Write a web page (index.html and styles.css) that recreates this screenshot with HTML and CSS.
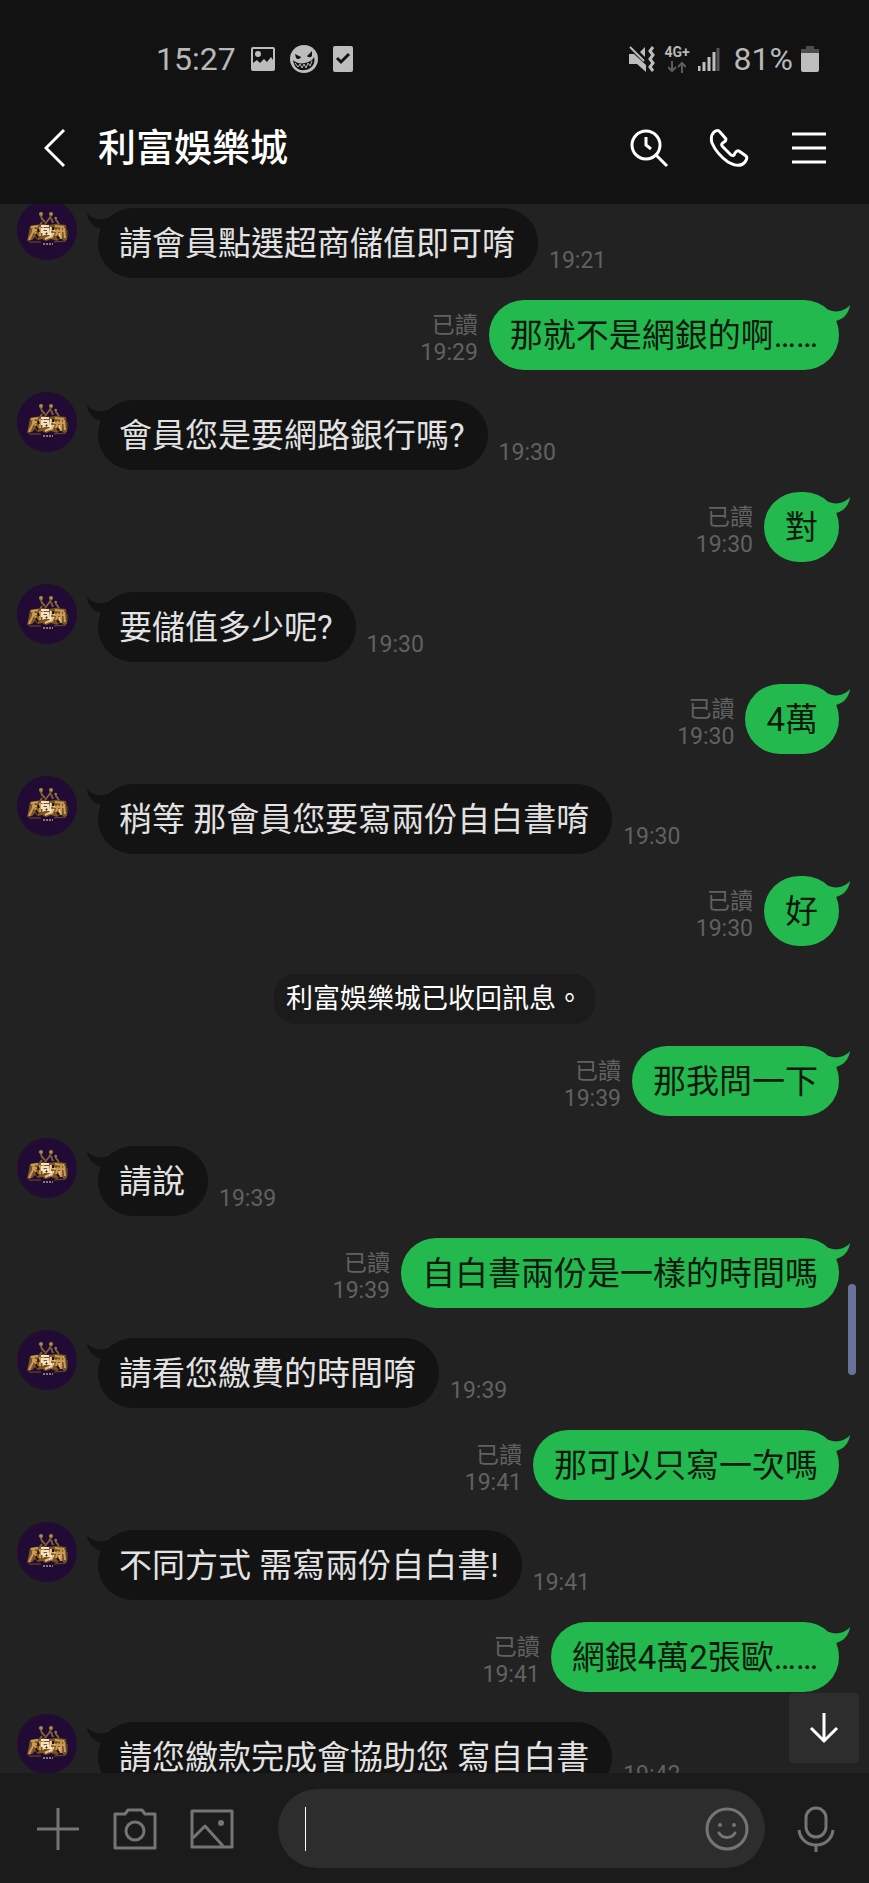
FILE: index.html
```
<!DOCTYPE html>
<html lang="zh-Hant">
	<head>
		<meta charset="UTF-8">
		<meta name="viewport" content="width=device-width, initial-scale=1">
		<title>利富娛樂城</title>
		<link rel="stylesheet" href="styles.css">
	</head>
	<body>
		<!-- shared shapes -->
		<svg class="defs" width="0" height="0" aria-hidden="true">
			<symbol id="logo" viewBox="0 0 60 60">
				<circle cx="30" cy="30" r="30" fill="#210a33"/>
				<g fill="none" stroke="#7d6138" stroke-width="2">
					<path d="M24 16l1 3 3 3M28 24l4-5 2-3M34 18l2 5M38 17l1 3 3 4M25 22l-2 3"/>
				</g>
				<g fill="#a98850"><circle cx="24" cy="14" r="2"/><circle cx="34" cy="14" r="2"/><circle cx="39" cy="18" r="1"/></g>
				<path d="M13 26l5-1 8-1 5 1 8-1 10 1 1 15-3 1-3-3-4 3-6-2-5 2-4-2-4 1-3-3-3 3-5 1 2-9z" fill="#7b5424"/>
				<path d="M14 27l7-1M17 26l-1 6-4 8M15 30h5M17 31l4 5M23 27v9M26 26v10M38 26l9 1M41 29l-2 7M44 27v12M47 28l1 10M38 31h10" fill="none" stroke="#c99b57" stroke-width="2"/>
				<path d="M24 26h8M25 29h6v3h-6zM26 34h9l-3 4M34 27l-1 6" fill="none" stroke="#f0e2c2" stroke-width="2"/>
				<path d="M34 29l4 2M37 33l-3 5M28 39l4-2M42 33l1 4" stroke="#e3bd7c" stroke-width="2"/>
				<path d="M19 34l2 4M21 29l1 3M36 27v3M40 36l2 3M29 33l1 1" stroke="#23130f" stroke-width="2"/>
				<path d="M12 42h12M37 42l12-1M50 30v8" stroke="#6d512f"/>
				<path d="M26 44h10" stroke="#8b7a70" stroke-width="2" stroke-dasharray="2 1"/>
			</symbol>
			<symbol id="tail" viewBox="0 0 30 30">
				<path d="M0 5C5 11 14 13 21 10L30 14V28H12L14 21C6 19 1 13 0 5z" fill="currentColor"/>
			</symbol>
		</svg>

		<div class="status">
			<span class="clock">15:27</span>
			<div class="notes">
				<svg width="26" height="28" viewBox="0 0 26 28"><path fill="#bdbdbd" fill-rule="evenodd" d="M3 2h20a2 2 0 0 1 2 2v20a2 2 0 0 1-2 2H3a2 2 0 0 1-2-2V4a2 2 0 0 1 2-2zm0 2v14l4-3 3 3 4-4 3 3 4-5 2 3V4zM8 6a3 3 0 1 1 0 6 3 3 0 0 1 0-6z"/></svg>
				<svg width="28" height="28" viewBox="0 0 28 28"><circle cx="14" cy="14" r="14" fill="#bdbdbd"/><path fill="#121212" d="M5 9l6 3a3 3 0 0 1-5 1zM22 6l-5 5a3 3 0 0 0 5 0zM3 15c3 3 7 4 12 3s8-3 9-6c2 6-2 12-9 13S4 22 3 15z"/><path d="M5 18l3 4 2-3 2 4 2-4 2 4 2-5 2 3 2-5" fill="none" stroke="#bdbdbd" stroke-width="1"/></svg>
				<svg width="22" height="28" viewBox="0 0 22 28"><rect x="1" y="1" width="20" height="26" rx="2" fill="#bdbdbd"/><path d="M5 13l4 4 8-8" fill="none" stroke="#121212" stroke-width="3"/></svg>
			</div>
			<div class="signals">
				<svg width="28" height="28" viewBox="0 0 28 28"><path fill="#bdbdbd" d="M1 9h5l12 11v7l-9-8H1zM12 7l5-5v10z"/><path d="M2 2l14 14" stroke="#bdbdbd" stroke-width="2"/><path d="M25 2l-3 4 3 4-3 4 3 4-3 4 3 4" fill="none" stroke="#bdbdbd" stroke-width="3"/></svg>
				<div class="net">
					<span>4G+</span>
					<svg width="18" height="12" viewBox="0 0 18 12"><path d="M4 0v10M0 6l4 4 4-4M14 12V2M10 6l4-4 4 4" fill="none" stroke="#5c5c5c" stroke-width="2"/></svg>
				</div>
				<svg width="22" height="26" viewBox="0 0 22 26"><path d="M1 20v5M6 16v9M11 11v14M16 6v19" stroke="#bdbdbd" stroke-width="3"/><path d="M20 2v23" stroke="#555" stroke-width="3"/></svg>
				<span class="percent">81%</span>
				<svg width="18" height="28" viewBox="0 0 18 28"><path d="M5 1h8v3h5v5H0V4h5z" fill="#4d4d4d"/><path d="M0 8h18v17a2 2 0 0 1-2 2H2a2 2 0 0 1-2-2z" fill="#bdbdbd"/></svg>
			</div>
		</div>

		<header class="topbar">
			<button type="button" class="back" aria-label="返回"><svg width="22" height="40" viewBox="0 0 22 40"><path d="M20 2L2 20l18 18" stroke-width="3"/></svg></button>
			<h1>利富娛樂城</h1>
			<button type="button" aria-label="搜尋"><svg width="40" height="40" viewBox="0 0 40 40"><g stroke-width="3"><circle cx="17" cy="17" r="14"/><path d="M27 27l11 11M17 9v8l5 4"/></g></svg></button>
			<button type="button" aria-label="通話"><svg width="40" height="40" viewBox="0 0 40 40"><path stroke-width="3" stroke-linejoin="round" d="M5 4Q9 1 11 4L17 11Q17 13 15 14C12 16 12 17 14 19L22 27C24 28 25 28 26 25Q28 22 30 23L37 28Q39 30 36 34C32 39 26 38 19 34C12 29 6 22 3 15Q1 8 5 4z"/></svg></button>
			<button type="button" aria-label="選單"><svg width="40" height="40" viewBox="0 0 40 40"><path stroke-width="3" d="M3 6h34M3 20h34M3 34h34"/></svg></button>
		</header>

		<main class="chat">
			<div class="messages">
				<div class="msg in"><svg class="avatar"><use href="#logo"/></svg><p class="bubble">請會員點選超商儲值即可唷<svg class="tail"><use href="#tail"/></svg></p><div class="meta"><time>19:21</time></div></div>
				<div class="msg out"><div class="meta"><span>已讀</span><time>19:29</time></div><p class="bubble">那就不是網銀的啊……<svg class="tail"><use href="#tail"/></svg></p></div>
				<div class="msg in"><svg class="avatar"><use href="#logo"/></svg><p class="bubble">會員您是要網路銀行嗎?<svg class="tail"><use href="#tail"/></svg></p><div class="meta"><time>19:30</time></div></div>
				<div class="msg out"><div class="meta"><span>已讀</span><time>19:30</time></div><p class="bubble">對<svg class="tail"><use href="#tail"/></svg></p></div>
				<div class="msg in"><svg class="avatar"><use href="#logo"/></svg><p class="bubble">要儲值多少呢?<svg class="tail"><use href="#tail"/></svg></p><div class="meta"><time>19:30</time></div></div>
				<div class="msg out"><div class="meta"><span>已讀</span><time>19:30</time></div><p class="bubble">4萬<svg class="tail"><use href="#tail"/></svg></p></div>
				<div class="msg in"><svg class="avatar"><use href="#logo"/></svg><p class="bubble">稍等 那會員您要寫兩份自白書唷<svg class="tail"><use href="#tail"/></svg></p><div class="meta"><time>19:30</time></div></div>
				<div class="msg out"><div class="meta"><span>已讀</span><time>19:30</time></div><p class="bubble">好<svg class="tail"><use href="#tail"/></svg></p></div>
				<p class="notice">利富娛樂城已收回訊息。</p>
				<div class="msg out"><div class="meta"><span>已讀</span><time>19:39</time></div><p class="bubble">那我問一下<svg class="tail"><use href="#tail"/></svg></p></div>
				<div class="msg in"><svg class="avatar"><use href="#logo"/></svg><p class="bubble">請說<svg class="tail"><use href="#tail"/></svg></p><div class="meta"><time>19:39</time></div></div>
				<div class="msg out"><div class="meta"><span>已讀</span><time>19:39</time></div><p class="bubble">自白書兩份是一樣的時間嗎<svg class="tail"><use href="#tail"/></svg></p></div>
				<div class="msg in"><svg class="avatar"><use href="#logo"/></svg><p class="bubble">請看您繳費的時間唷<svg class="tail"><use href="#tail"/></svg></p><div class="meta"><time>19:39</time></div></div>
				<div class="msg out"><div class="meta"><span>已讀</span><time>19:41</time></div><p class="bubble">那可以只寫一次嗎<svg class="tail"><use href="#tail"/></svg></p></div>
				<div class="msg in"><svg class="avatar"><use href="#logo"/></svg><p class="bubble">不同方式 需寫兩份自白書!<svg class="tail"><use href="#tail"/></svg></p><div class="meta"><time>19:41</time></div></div>
				<div class="msg out"><div class="meta"><span>已讀</span><time>19:41</time></div><p class="bubble">網銀4萬2張歐……<svg class="tail"><use href="#tail"/></svg></p></div>
				<div class="msg in"><svg class="avatar"><use href="#logo"/></svg><p class="bubble">請您繳款完成會協助您 寫自白書<svg class="tail"><use href="#tail"/></svg></p><div class="meta"><time>19:42</time></div></div>
			</div>
			<div class="scrollbar"></div>
			<button type="button" class="to-bottom" aria-label="到最新訊息"><svg width="30" height="32" viewBox="0 0 30 32"><path d="M15 1v28M2 16l13 13 13-13" stroke-width="3"/></svg></button>
		</main>

		<form class="composer">
			<button type="button" aria-label="更多"><svg width="44" height="46" viewBox="0 0 44 46"><path stroke-width="3" d="M1 23h42M22 2v42"/></svg></button>
			<button type="button" aria-label="相機"><svg width="44" height="46" viewBox="0 0 44 46"><g stroke-width="3" stroke-linejoin="round"><path d="M2 8h10l3-4h14l3 4h10v34H2z"/><circle cx="22" cy="25" r="9"/></g></svg></button>
			<button type="button" aria-label="相簿"><svg width="44" height="46" viewBox="0 0 44 46"><g stroke-width="3" stroke-linejoin="round"><path d="M2 5h40v36H2z"/><path d="M3 32l12-12 18 20"/></g><circle cx="31" cy="17" r="3" fill="#757575" stroke="none"/></svg></button>
			<div class="field">
				<span class="caret"></span>
				<input type="text" aria-label="輸入訊息">
				<button type="button" aria-label="貼圖"><svg width="44" height="46" viewBox="0 0 44 46"><g stroke-width="3"><circle cx="22" cy="23" r="20"/><path d="M14 27c4 6 12 6 16 0" stroke-linecap="round"/></g><g fill="#757575" stroke="none"><circle cx="15" cy="19" r="2"/><circle cx="29" cy="19" r="2"/></g></svg></button>
			</div>
			<button type="button" aria-label="語音訊息"><svg width="44" height="46" viewBox="0 0 44 46"><g stroke-width="3"><rect x="12" y="2" width="20" height="29" rx="10"/><path d="M5 24c1 9 8 15 17 15s16-6 17-15M22 39v7"/></g></svg></button>
		</form>
	</body>
</html>
```

FILE: styles.css
```
* {
	box-sizing: border-box;
}
body {
	margin: 0;
	height: 100vh;
	display: flex;
	flex-direction: column;
	background: #121212;
	color: #fff;
	font-family: Roboto, "Noto Sans CJK TC", sans-serif;
}
p, h1 {
	margin: 0;
}
svg {
	display: block;
	flex: none;
}
button {
	padding: 0;
	border: none;
	background: none;
}
button svg {
	fill: none;
	stroke: #fff;
}
.defs {
	position: absolute;
}

/* status bar */
.status {
	display: flex;
	align-items: center;
	padding: 40px 50px 18px 156px;
	line-height: 38px;
	font-size: 32px;
	color: #b8b8b8;
}
.notes {
	display: flex;
	gap: 14px;
	margin-left: 14px;
}
.signals {
	display: flex;
	align-items: center;
	gap: 8px;
	margin-left: auto;
}
.net {
	display: flex;
	flex-direction: column;
	align-items: center;
	gap: 2px;
	font-size: 14px;
	font-weight: 700;
	line-height: 14px;
}
.percent {
	margin: 0 0 0 6px;
}

/* title bar */
.topbar {
	display: flex;
	align-items: center;
	gap: 40px;
	padding: 32px 40px 36px 44px;
}
.topbar h1 {
	flex: 1;
	margin-left: -8px;
	font-size: 38px;
	font-weight: 500;
	line-height: 40px;
}

/* conversation */
.chat {
	flex: 1;
	min-height: 0;
	position: relative;
	overflow: hidden;
	background: #222;
}
.messages {
	display: flex;
	flex-direction: column;
	gap: 22px;
	margin-top: -4px;
}
.msg {
	display: flex;
	align-items: flex-end;
	gap: 11px;
}
.in {
	padding-left: 17px;
}
.out {
	justify-content: flex-end;
	padding-right: 30px;
}
.avatar {
	width: 60px;
	height: 60px;
	margin-right: 10px;
	align-self: flex-start;
}
.bubble {
	position: relative;
	padding: 16px 21px 14px;
	border-radius: 35px;
	font-size: 33px;
	line-height: 40px;
}
.in .bubble {
	margin-top: 8px;
	padding-right: 23px;
	background: #131313;
	color: #e2e2e2;
}
.out .bubble {
	background: #23b94f;
	color: #0b1a0e;
}
.tail {
	position: absolute;
	top: 0;
	width: 30px;
	height: 30px;
}
.in .tail {
	left: -11px;
	color: #131313;
}
.out .tail {
	right: -11px;
	color: #23b94f;
	transform: scaleX(-1);
}
.meta {
	display: flex;
	flex-direction: column;
	padding-bottom: 4px;
	font-size: 23px;
	line-height: 27px;
	color: #616161;
}
.out .meta {
	text-align: right;
}
.notice {
	align-self: center;
	margin-top: 6px;
	padding: 5px 12px;
	border-radius: 22px;
	background: #1b1b1b;
	font-size: 27px;
	line-height: 40px;
}
.scrollbar {
	position: absolute;
	top: 1080px;
	right: 13px;
	width: 8px;
	height: 91px;
	border-radius: 4px;
	background: #69729a;
}
.to-bottom {
	position: absolute;
	right: 10px;
	bottom: 10px;
	width: 70px;
	height: 70px;
	border-radius: 4px;
	background: #2d2d2d;
}
.to-bottom svg {
	margin: 0 auto;
}

/* input row */
.composer {
	display: flex;
	align-items: center;
	gap: 33px;
	padding: 16px 31px 15px 36px;
	background: #1b1b1b;
}
.composer svg {
	stroke: #757575;
}
.field {
	flex: 1;
	min-width: 0;
	display: flex;
	align-items: center;
	margin-left: 11px;
	margin-right: -4px;
	height: 79px;
	padding: 0 16px 0 27px;
	border-radius: 40px;
	background: #2d2d2d;
}
.caret {
	width: 1px;
	height: 44px;
	background: #fff;
}
.field input {
	flex: 1;
	min-width: 0;
	padding: 0;
	border: none;
	outline: none;
	background: none;
	color: #fff;
	font: inherit;
	font-size: 33px;
}
```
